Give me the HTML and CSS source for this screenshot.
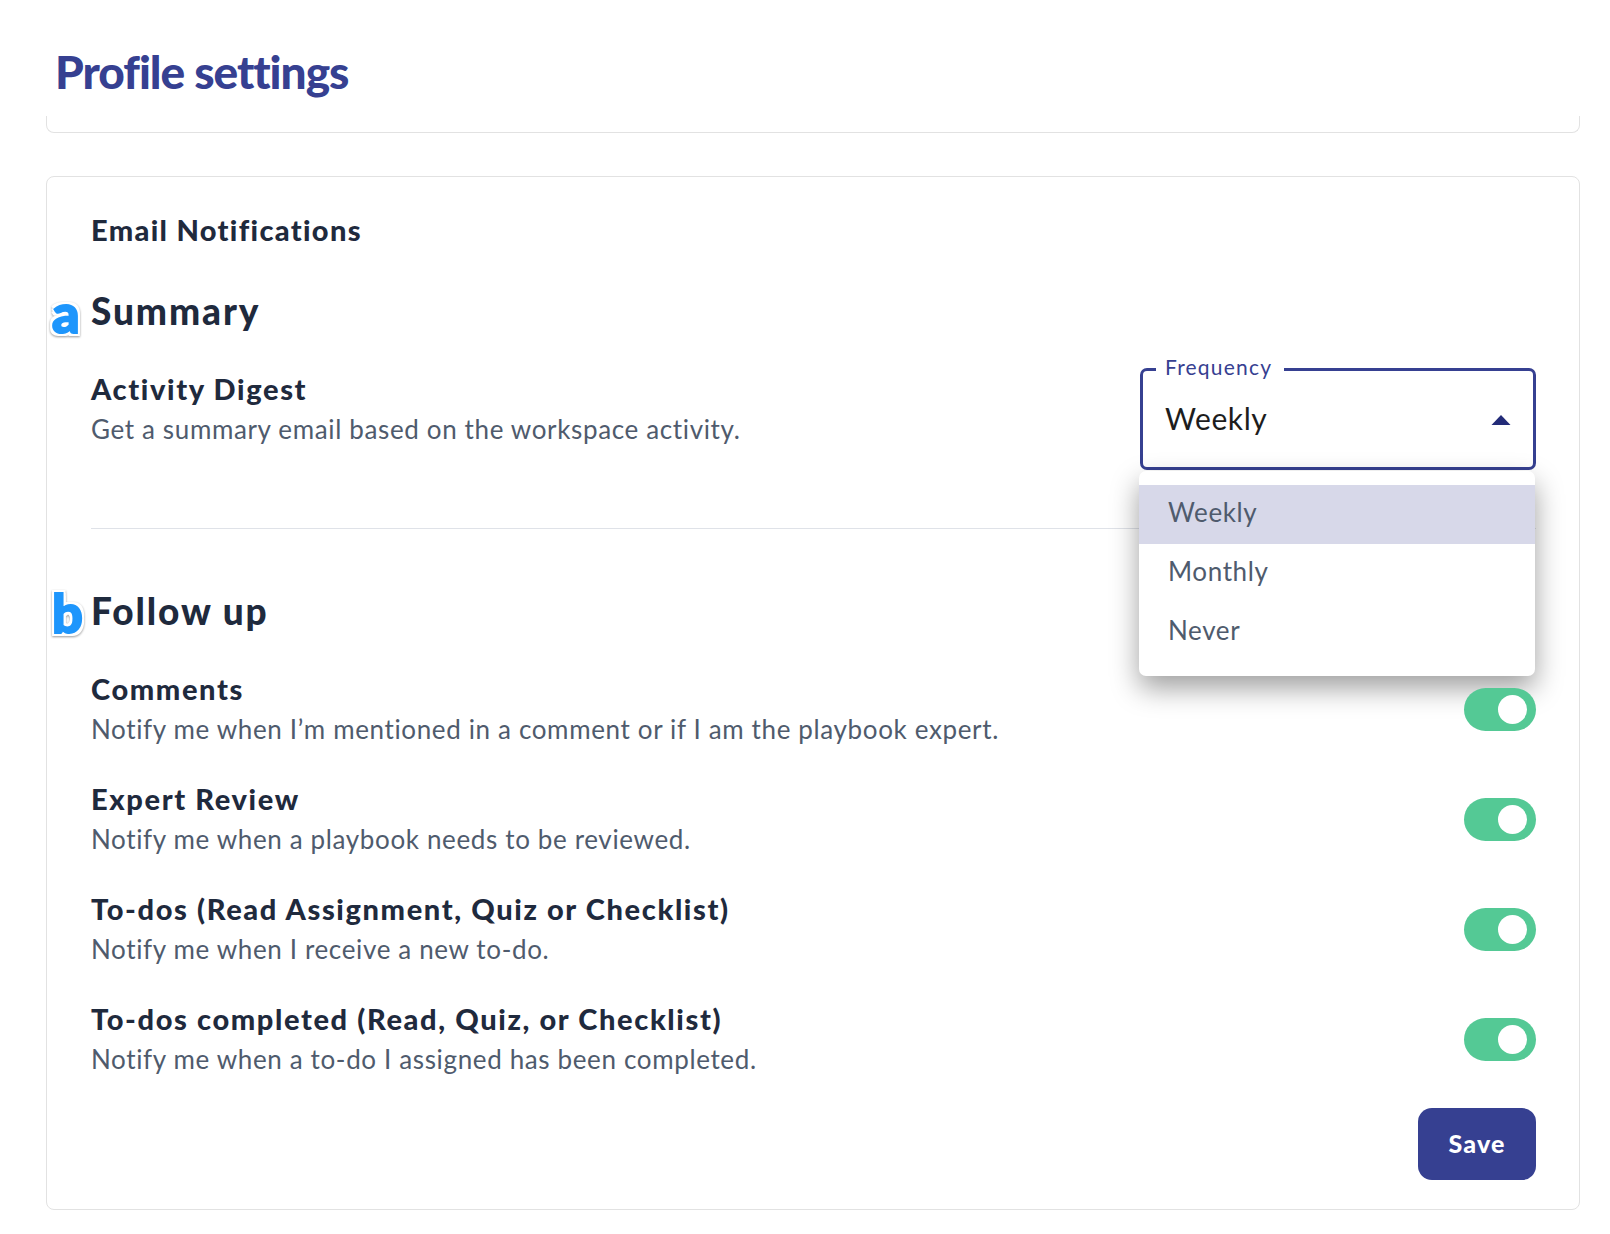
FILE: index.html
```html
<!DOCTYPE html>
<html lang="en">
<head>
<meta charset="utf-8">
<title>Profile settings</title>
<link rel="stylesheet" href="styles.css">
</head>
<body>
<main class="page">
  <h1 class="page-title">Profile settings</h1>
  <div class="card-stub"></div>
  <section class="card">
    <h2 class="card-title">Email Notifications</h2>

    <div class="group group-summary">
      <h3 class="group-title"><span class="badge">a</span>Summary</h3>
      <div class="setting setting-top">
        <div class="setting-text">
          <div class="setting-name">Activity Digest</div>
          <div class="setting-desc">Get a summary email based on the workspace activity.</div>
        </div>
        <div class="select">
          <span class="select-label">Frequency</span>
          <span class="select-value">Weekly</span>
          <svg class="select-arrow" width="20" height="10" viewBox="0 0 20 10"><path d="M10 0 L19.5 10 L.5 10 Z" fill="#232b78"/></svg>
          <ul class="menu">
            <li class="menu-item menu-item-active">Weekly</li>
            <li class="menu-item">Monthly</li>
            <li class="menu-item">Never</li>
          </ul>
        </div>
      </div>
    </div>

    <hr class="divider">

    <div class="group">
      <h3 class="group-title"><span class="badge">b</span>Follow up</h3>
      <div class="setting-list">
        <div class="setting">
          <div class="setting-text">
            <div class="setting-name">Comments</div>
            <div class="setting-desc">Notify me when I’m mentioned in a comment or if I am the playbook expert.</div>
          </div>
          <span class="toggle"></span>
        </div>
        <div class="setting">
          <div class="setting-text">
            <div class="setting-name">Expert Review</div>
            <div class="setting-desc">Notify me when a playbook needs to be reviewed.</div>
          </div>
          <span class="toggle"></span>
        </div>
        <div class="setting">
          <div class="setting-text">
            <div class="setting-name">To-dos (Read Assignment, Quiz or Checklist)</div>
            <div class="setting-desc">Notify me when I receive a new to-do.</div>
          </div>
          <span class="toggle"></span>
        </div>
        <div class="setting">
          <div class="setting-text">
            <div class="setting-name">To-dos completed (Read, Quiz, or Checklist)</div>
            <div class="setting-desc">Notify me when a to-do I assigned has been completed.</div>
          </div>
          <span class="toggle"></span>
        </div>
      </div>
    </div>

    <div class="actions"><button class="save" type="button">Save</button></div>
  </section>
</main>
</body>
</html>
```

FILE: styles.css
```css
* { box-sizing: border-box; }
html, body { margin: 0; background: #fff; }
body { font-family: "Lato", "Noto Sans", sans-serif; color: #1f2a3d; }
.page { padding: 0 30px 0 46px; height: 1234px; overflow: hidden; }
.page-title {
  margin: 0; height: 116px; padding: 44px 0 0 9px;
  font-size: 46px; line-height: 56px; font-weight: 900; color: #364091; letter-spacing: -1px;
}
.card-stub {
  height: 17px; border: 1px solid #e2e2e2; border-top: 0; border-radius: 0 0 8px 8px;
  margin-bottom: 43px;
}
.card {
  border: 1px solid #e2e2e2; border-radius: 8px;
  padding: 33px 43px 29px 44px;
}
.card-title { margin: 0; font-size: 29px; line-height: 40px; font-weight: 900; letter-spacing: 1.33px; }
.group-summary { margin-top: 41px; }
.group-title {
  position: relative; margin: 0; font-size: 37px; line-height: 40px; font-weight: 900; letter-spacing: 1.9px;
}
.badge {
  position: absolute; left: -39px; top: -1px; letter-spacing: 0;
  font-size: 54px; line-height: 46px; font-weight: 900; color: #1e96fc;
  -webkit-text-stroke: 2px #1e96fc;
  text-shadow: 3px 0 #fff, -3px 0 #fff, 0 3px #fff, 0 -3px #fff, 3px 3px #fff, -3px 3px #fff, 3px -3px #fff, -3px -3px #fff;
  filter: drop-shadow(0 1px 1px rgba(0, 0, 0, .4));
}
.setting { display: flex; justify-content: space-between; align-items: center; }
.setting-top { align-items: flex-start; margin-top: 38px; }
.setting-name { font-size: 29px; line-height: 40px; font-weight: 900; letter-spacing: 1.62px; }
.setting-desc { font-size: 26px; line-height: 40px; color: #4f5b6d; letter-spacing: .64px; }
.setting-list { display: flex; flex-direction: column; gap: 30px; margin-top: 38px; }
.select {
  position: relative; width: 396px; height: 102px; margin-top: -1px;
  border: 3px solid #364091; border-radius: 7px;
  display: flex; align-items: flex-start; justify-content: space-between;
  padding: 29px 22px 0 22px;
}
.select-label {
  position: absolute; left: 13px; top: -17px; padding: 0 12px 0 9px;
  background: #fff; color: #364091; font-size: 21px; line-height: 26px; letter-spacing: 1.2px;
}
.select-value { font-size: 30px; line-height: 36px; color: #1d1d1d; letter-spacing: .6px; }
.select-arrow { margin-top: 15px; }
.menu {
  position: absolute; left: -4px; top: 100px; width: 396px; height: 205px;
  margin: 0; padding: 14px 0; list-style: none; background: #fff; border-radius: 7px;
  box-shadow: 0 12px 28px rgba(0, 0, 0, .38);
}
.menu-item { height: 59px; padding-left: 29px; font-size: 26px; line-height: 55px; color: #4f5b6d; letter-spacing: .62px; }
.menu-item-active { background: #d7d8e9; }
.divider { margin: 58px 0 0; border: 0; border-top: 1px solid #dfe2e8; }
.divider + .group { margin-top: 62px; }
.toggle { position: relative; width: 72px; height: 43px; border-radius: 22px; background: #54c995; }
.toggle::after {
  content: ""; position: absolute; left: 34px; top: 7px; width: 29px; height: 29px;
  border-radius: 50%; background: #fff;
}
.actions { display: flex; justify-content: flex-end; margin-top: 29px; }
.save {
  width: 118px; height: 72px; border: 0; border-radius: 14px; background: #364091; color: #fff;
  padding: 0 0 3px;
  font-family: inherit; font-size: 25px; font-weight: 900; letter-spacing: 1.2px;
}
```
